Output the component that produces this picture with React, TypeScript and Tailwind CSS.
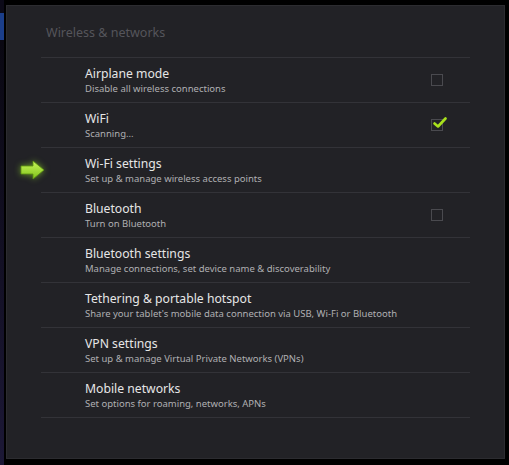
type Row = {
  title: string
  summary: string
  check?: 'on' | 'off'
  arrow?: boolean
}

const ROWS: Row[] = [
  { title: 'Airplane mode', summary: 'Disable all wireless connections', check: 'off' },
  { title: 'WiFi', summary: 'Scanning...', check: 'on' },
  { title: 'Wi-Fi settings', summary: 'Set up & manage wireless access points', arrow: true },
  { title: 'Bluetooth', summary: 'Turn on Bluetooth', check: 'off' },
  { title: 'Bluetooth settings', summary: 'Manage connections, set device name & discoverability' },
  { title: 'Tethering & portable hotspot', summary: "Share your tablet's mobile data connection via USB, Wi-Fi or Bluetooth" },
  { title: 'VPN settings', summary: 'Set up & manage Virtual Private Networks (VPNs)' },
  { title: 'Mobile networks', summary: 'Set options for roaming, networks, APNs' },
]

function Arrow() {
  return (
    <svg width="26" height="20" viewBox="0 0 26 20" className="drop-shadow-[0_0_3px_rgba(150,230,40,0.6)]">
      <defs>
        <linearGradient id="ag" x1="0" y1="0" x2="0" y2="1">
          <stop offset="0" stopColor="#c8f55a" />
          <stop offset="1" stopColor="#7fc21a" />
        </linearGradient>
      </defs>
      <path d="M1 6 H13 V1 L24 10 L13 19 V14 H1 Z" fill="url(#ag)" stroke="#5a8f10" strokeWidth="0.8" />
    </svg>
  )
}

function Tick() {
  return (
    <svg width="14" height="12" viewBox="0 0 14 12" className="absolute left-[1px] top-[-3px]">
      <path d="M1.5 6.5 L5 9.5 L12.5 1.5" fill="none" stroke="#a8e01c" strokeWidth="2.6" strokeLinecap="round" strokeLinejoin="round" />
    </svg>
  )
}

function SettingRow({ row }: { row: Row }) {
  return (
    <div className="relative flex h-[45px] items-center border-b border-[#333338]">
      {row.arrow && (
        <div className="absolute left-[-21px] top-[12px]">
          <Arrow />
        </div>
      )}
      <div className="flex-1 pl-[44px]">
        <div className="text-[12.2px] leading-[16px] text-[#e6e6e6]">{row.title}</div>
        <div className="text-[9.5px] leading-[13px] text-[#b0b0b3]">{row.summary}</div>
      </div>
      {row.check && (
        <div className="relative mr-[27px] h-[12px] w-[12px] border border-[#4a4a4f]">
          {row.check === 'on' && <Tick />}
        </div>
      )}
    </div>
  )
}

export default function App() {
  return (
    <div
      className="flex h-[465px] w-[509px] bg-black"
      style={{ fontFamily: '"Noto Sans", "Open Sans", sans-serif' }}
    >
      <div className="flex w-[4px] flex-col bg-[#0c0a18]">
        <div className="mt-[13px] h-[27px] bg-[#1b3e8a]" />
        <div className="flex-1 bg-gradient-to-b from-[#0a0812] to-[#1c1836]" />
      </div>
      <div className="mt-[5px] mb-[6px] ml-[2px] mr-[4px] flex-1 border border-[#2c2c30] bg-[#222226]">
        <div className="px-[39px] pt-[19px] text-[12.5px] leading-[16px] text-[#55555b]">
          Wireless &amp; networks
        </div>
        <div className="mt-[16px] ml-[34px] mr-[34px] border-t border-[#333338]">
          {ROWS.map((r) => (
            <SettingRow key={r.title} row={r} />
          ))}
        </div>
      </div>
    </div>
  )
}
